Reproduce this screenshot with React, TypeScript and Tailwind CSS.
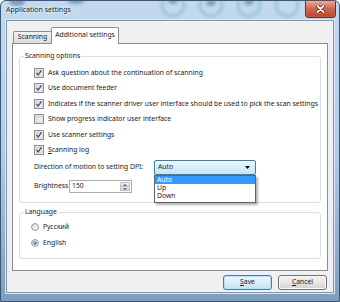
import React from "react"

const font = "font-['Noto_Sans','Open_Sans',sans-serif]"

function CheckBox({ checked }: { checked: boolean }) {
  return (
    <svg width="10" height="10" viewBox="0 0 10 10" className="shrink-0">
      <defs>
        <linearGradient id="cbg" x1="0" y1="0" x2="1" y2="1">
          <stop offset="0" stopColor="#dcdcdc" />
          <stop offset="1" stopColor="#fbfbfb" />
        </linearGradient>
      </defs>
      <rect x="0.5" y="0.5" width="9" height="9" fill="#f4f4f4" stroke="#8e8f8f" />
      <rect x="2" y="2" width="6" height="6" fill="url(#cbg)" stroke="#b9b9b9" strokeWidth="0.6" />
      {checked && (
        <path d="M2.6 4.9 L4.2 7 L7.4 2.4" fill="none" stroke="#34488a" strokeWidth="1.3" />
      )}
    </svg>
  )
}

function Radio({ checked }: { checked: boolean }) {
  return (
    <svg width="8" height="8" viewBox="0 0 8 8" className="shrink-0">
      <defs>
        <radialGradient id="rbg" cx="0.6" cy="0.6" r="0.7">
          <stop offset="0" stopColor="#f8f8f8" />
          <stop offset="1" stopColor="#cfcfcf" />
        </radialGradient>
        <radialGradient id="rdot" cx="0.4" cy="0.35" r="0.7">
          <stop offset="0" stopColor="#8fc2ef" />
          <stop offset="1" stopColor="#1d4f96" />
        </radialGradient>
      </defs>
      <circle cx="4" cy="4" r="3.5" fill="url(#rbg)" stroke="#8e8f8f" strokeWidth="0.8" />
      {checked && <circle cx="4" cy="4" r="1.8" fill="url(#rdot)" />}
    </svg>
  )
}

function CheckRow({ checked, children }: { checked: boolean; children: React.ReactNode }) {
  return (
    <div className="flex h-[15.5px] items-center gap-[4px]">
      <CheckBox checked={checked} />
      <span>{children}</span>
    </div>
  )
}

function Group({ title, className, children }: { title: string; className: string; children: React.ReactNode }) {
  return (
    <div className={`relative rounded-[3px] border border-[#d5dfe5] ${className}`}>
      <span className="absolute left-[4px] top-[-6px] bg-white px-[1px] leading-[10px]">{title}</span>
      {children}
    </div>
  )
}

export default function App() {
  return (
    <div className={`${font} relative flex h-[302px] w-[340px] flex-col overflow-hidden rounded-t-[6px] border border-[#3c5878] bg-gradient-to-b from-[#c2d9f0] via-[#b3cce6] to-[#7f9dbd] text-[6.8px] text-[#1a1a1a]`}>
      {/* glass reflections behind title */}
      <svg className="absolute left-0 top-0" width="340" height="24" viewBox="0 0 340 24">
        <defs>
          <filter id="bl">
            <feGaussianBlur stdDeviation="1.8" />
          </filter>
        </defs>
        <g filter="url(#bl)" opacity="0.45">
          <ellipse cx="16" cy="1" rx="8" ry="4" fill="#3b5674" />
          <ellipse cx="75" cy="-1" rx="9" ry="4" fill="#3b5674" />
          <circle cx="172" cy="4" r="11" fill="none" stroke="#6db2b0" strokeWidth="3" />
          <circle cx="210" cy="4" r="11" fill="none" stroke="#6db2b0" strokeWidth="3" />
          <circle cx="248" cy="4" r="11" fill="none" stroke="#6db2b0" strokeWidth="3" />
          <circle cx="286" cy="4" r="11" fill="none" stroke="#6db2b0" strokeWidth="3" />
          <ellipse cx="172" cy="0" rx="5" ry="3" fill="#3b5674" />
          <ellipse cx="210" cy="2" rx="5" ry="3" fill="#3b5674" />
          <ellipse cx="248" cy="1" rx="5" ry="3" fill="#3b5674" />
        </g>
      </svg>

      {/* title bar */}
      <div className="relative flex h-[19px] shrink-0 items-center justify-between pl-[5px] pr-[3px]">
        <span className="text-[7px] [text-shadow:0_0_5px_#ffffff,0_0_3px_#ffffff]">Application settings</span>
        <div className="flex h-[17px] w-[31px] items-center justify-center self-start rounded-b-[4px] border border-t-0 border-[#6e2a20] bg-gradient-to-b from-[#e9a99b] via-[#d0634c] to-[#c2452b] shadow-[inset_0_0_1px_#ffd0c4]">
          <svg width="9" height="8" viewBox="0 0 9 8">
            <path d="M1.5 1 L7.5 7 M7.5 1 L1.5 7" stroke="#4a1a12" strokeWidth="3.2" strokeLinecap="round" />
            <path d="M1.5 1 L7.5 7 M7.5 1 L1.5 7" stroke="#ffffff" strokeWidth="1.8" strokeLinecap="round" />
          </svg>
        </div>
      </div>

      {/* client area */}
      <div className="relative mx-[5px] mb-[8px] flex flex-1 flex-col border border-[#7d98b5] bg-[#f0f0f0] px-[5px] pt-[7px] shadow-[0_0_0_1px_#dbe7f3]">
        {/* tabs */}
        <div className="flex h-[15px] items-end pl-[1px]">
          <div className="flex h-[12px] w-[39px] items-center justify-center rounded-t-[2px] border border-b-0 border-[#898c95] bg-gradient-to-b from-[#f2f2f2] to-[#dcdcdc]">
            Scanning
          </div>
          <div className="relative z-10 mb-[-1px] ml-[-1px] flex h-[17px] w-[68px] items-center justify-center rounded-t-[2px] border border-b-0 border-[#898c95] bg-white pb-[1px]">
            Additional settings
          </div>
        </div>

        {/* tab panel */}
        <div className="flex h-[228px] flex-col border border-[#898c95] bg-white px-[6px] pt-[12px]">
          <Group title="Scanning options" className="flex flex-col pb-[9px] pl-[14px] pt-[8px]">
            <CheckRow checked>Ask question about the continuation of scanning</CheckRow>
            <CheckRow checked>Use document feeder</CheckRow>
            <CheckRow checked>Indicates if the scanner driver user interface should be used to pick the scan settings</CheckRow>
            <CheckRow checked={false}>Show progress indicator user interface</CheckRow>
            <CheckRow checked>Use scanner settings</CheckRow>
            <CheckRow checked>
              <span className="underline decoration-[0.5px] underline-offset-[1px]">S</span>canning log
            </CheckRow>

            <div className="mt-[1px] flex h-[16px] items-center">
              <span className="w-[120px]">Direction of motion to setting DPI:</span>
              <div className="relative">
                <div className="flex h-[15px] w-[102px] items-center justify-between rounded-[2px] border border-[#3c7fb1] bg-gradient-to-b from-[#eaf6fd] via-[#d9f0fc] to-[#bee6fd] pl-[3px] pr-[5px]">
                  <span>Auto</span>
                  <svg width="5" height="3" viewBox="0 0 5 3">
                    <path d="M0 0 H5 L2.5 3 Z" fill="#000" />
                  </svg>
                </div>
                <div className="absolute left-0 top-full z-20 flex w-[102px] flex-col border border-[#646464] bg-white pb-[2px] leading-[8px] shadow-[2px_2px_2px_rgba(0,0,0,0.3)]">
                  <div className="h-[8px] bg-[#3399ff] pl-[2px] text-white">Auto</div>
                  <div className="h-[8px] pl-[2px]">Up</div>
                  <div className="h-[8px] pl-[2px]">Down</div>
                </div>
              </div>
            </div>

            <div className="mt-[5px] flex h-[13px] items-center">
              <span className="w-[35px]">Brightness</span>
              <div className="flex h-[13px] w-[63px] items-stretch border border-[#abadb3] bg-white">
                <span className="flex flex-1 items-center pl-[2px]">150</span>
                <div className="my-[1px] mr-[1px] flex w-[10px] flex-col">
                  <div className="flex flex-1 items-center justify-center rounded-t-[1px] border border-[#b8bcc4] bg-gradient-to-b from-[#f6f6f6] to-[#dcdcdc]">
                    <svg width="4" height="2" viewBox="0 0 4 2">
                      <path d="M0 2 H4 L2 0 Z" fill="#4d6185" />
                    </svg>
                  </div>
                  <div className="flex flex-1 items-center justify-center rounded-b-[1px] border border-t-0 border-[#b8bcc4] bg-gradient-to-b from-[#ececec] to-[#d4d4d4]">
                    <svg width="4" height="2" viewBox="0 0 4 2">
                      <path d="M0 0 H4 L2 2 Z" fill="#4d6185" />
                    </svg>
                  </div>
                </div>
              </div>
            </div>
          </Group>

          <Group title="Language" className="mt-[9px] flex flex-col pb-[7px] pl-[11px] pt-[6px]">
            <div className="flex h-[16px] items-center gap-[4px]">
              <Radio checked={false} />
              <span>Русский</span>
            </div>
            <div className="flex h-[16px] items-center gap-[4px]">
              <Radio checked />
              <span>English</span>
            </div>
          </Group>
        </div>

        {/* buttons */}
        <div className="mt-[4px] flex justify-end gap-[6px] pr-[1px]">
          <button className="flex h-[15px] w-[49px] items-center justify-center rounded-[3px] border border-[#3c7fb1] bg-gradient-to-b from-[#eef7fd] via-[#dcedf8] to-[#c4e1f3] shadow-[inset_0_0_0_1px_#b8e2fa]">
            <span>
              <span className="underline decoration-[0.5px] underline-offset-[1px]">S</span>ave
            </span>
          </button>
          <button className="flex h-[15px] w-[49px] items-center justify-center rounded-[3px] border border-[#707070] bg-gradient-to-b from-[#f2f2f2] via-[#e6e6e6] to-[#d2d2d2] shadow-[inset_0_0_0_1px_#fafafa]">
            <span>
              <span className="underline decoration-[0.5px] underline-offset-[1px]">C</span>ancel
            </span>
          </button>
        </div>
      </div>
    </div>
  )
}
